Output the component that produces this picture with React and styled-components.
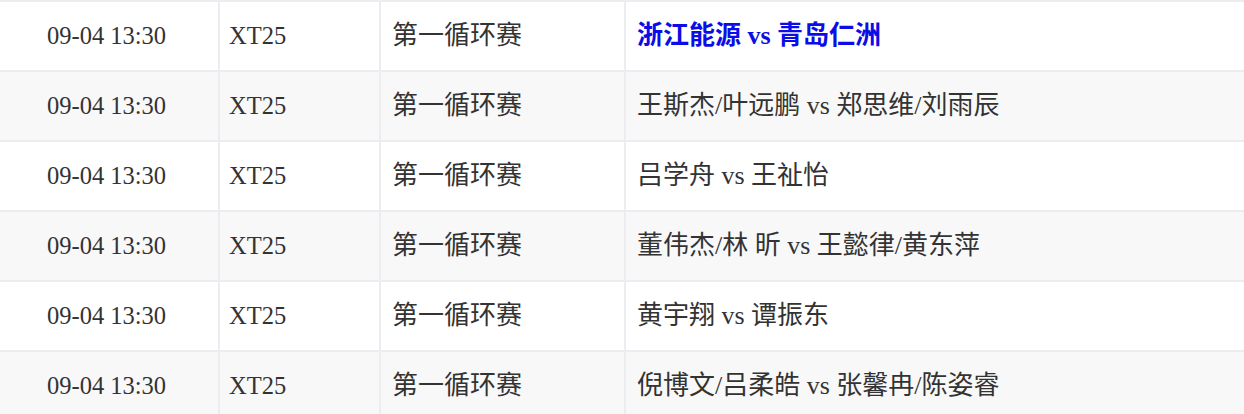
import React from "react";
import styled, { createGlobalStyle } from "styled-components";

const GlobalStyle = createGlobalStyle`
  body {
    margin: 0;
    background: #fff;
    font-family: "Liberation Serif", "Noto Sans CJK SC", serif;
  }
`;

const Table = styled.table`
  width: 1244px;
  table-layout: fixed;
  border-collapse: collapse;
  border-top: 2px solid #ebedf0;
  color: #333;
`;

const TR = styled.tr`
  background-color: ${(props) => (props.index % 2 ? "#f8f8f8" : "#fff")};
`;

const TD = styled.td`
  height: 68px;
  padding: 0 0 0 ${(props) => props.pad || "11px"};
  border-bottom: 2px solid #ebedf0;
  border-left: ${(props) => (props.first ? "none" : "2px solid #ebedf0")};
  font-size: ${(props) => (props.cjk ? "26px" : "24.5px")};
  white-space: nowrap;
  line-height: 1;
`;

const MatchLink = styled.a`
  color: #0c0ce6;
  font-weight: bold;
  text-decoration: none;
`;

const rows = [
  { teams: "浙江能源 vs 青岛仁洲", link: true },
  { teams: "王斯杰/叶远鹏 vs 郑思维/刘雨辰" },
  { teams: "吕学舟 vs 王祉怡" },
  { teams: "董伟杰/林 昕 vs 王懿律/黄东萍" },
  { teams: "黄宇翔 vs 谭振东" },
  { teams: "倪博文/吕柔皓 vs 张馨冉/陈姿睿" },
];

function App() {
  return (
    <>
      <GlobalStyle />
      <Table>
        <colgroup>
          <col style={{ width: 219 }} />
          <col style={{ width: 161 }} />
          <col style={{ width: 245 }} />
          <col />
        </colgroup>
        <tbody>
          {rows.map((row, index) => (
            <TR index={index} key={index}>
              <TD first pad="47px">
                09-04 13:30
              </TD>
              <TD pad="9px">XT25</TD>
              <TD cjk>第一循环赛</TD>
              <TD cjk>
                {row.link ? <MatchLink href="#">{row.teams}</MatchLink> : row.teams}
              </TD>
            </TR>
          ))}
        </tbody>
      </Table>
    </>
  );
}

export default App;
